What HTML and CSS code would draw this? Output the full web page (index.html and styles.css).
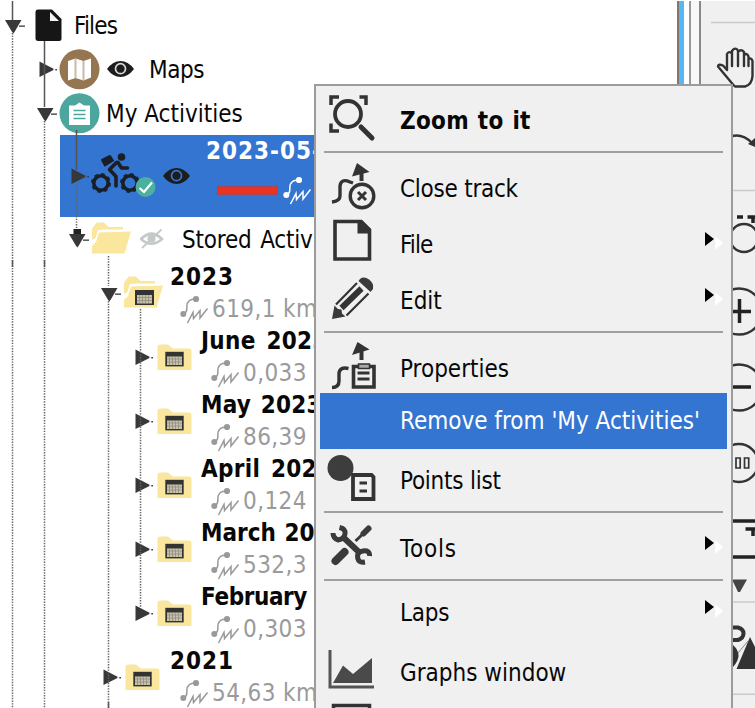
FILE: index.html
```html
<!DOCTYPE html>
<html lang="en">
<head>
<meta charset="utf-8">
<title>My Activities</title>
<link rel="stylesheet" href="styles.css">
</head>
<body>
<svg class="defs" aria-hidden="true">
  <symbol id="down" viewBox="0 0 24 24"><path d="M1 7H17.500L10.800 18.500 9.300 20.500 7.800 18.500Z"/><path d="M15 12.500h6v1.300h-6z"/></symbol>
  <symbol id="right" viewBox="0 0 24 24"><path d="M3.500 4.500 17.500 11.800V13L3.500 20Z"/><path d="M19.300 12h1.600v1.600h-1.600z"/></symbol>
  <symbol id="eye" viewBox="0 0 27 18"><path d="M0 9Q6 1 13.500 1T27 9Q21 17 13.500 17T0 9Z"/><circle class="ring" cx="13.500" cy="8.700" r="5"/><circle cx="13.500" cy="8.700" r="2"/></symbol>
  <symbol id="track" viewBox="179 291 29 30"><circle cx="195" cy="296" r="3.100"/><circle cx="182.300" cy="311" r="3"/><path class="line" d="M183 311C189 307 183 302 188 298Q190 296 195 296M186.500 320 192 309.500 192.500 315.500 199 307.500 199 315 206.500 305.500"/></symbol>
  <symbol id="folder" viewBox="157 343 35 27"><path class="paper" d="M157.500 346Q157.500 343.500 160 343.500H168L173 347.500H189Q191.500 347.500 191.500 350V369H157.500Z"/><path class="dark" d="M165.300 350.800h18.400v14.600h-18.400z"/><path class="cells" d="M167 355.500h15v8.500h-15z"/><path class="grid" d="M169.500 355.500v8.500M172.500 355.500v8.500M175.500 355.500v8.500M178.500 355.500v8.500M167 358h15M167 361h15"/></symbol>
  <symbol id="open" viewBox="91 223 40 34"><path class="paper" d="M92 241V230Q94 226 97 223.500H104L108.500 228H123V230.500H106L98 231 95.500 239Z"/><path class="paper" d="M99 233.500 131 232.500 124.500 254.500H92V247L96 243Z"/></symbol>
  <symbol id="cal" viewBox="0 0 19 15"><path class="dark" d="M0 0h19v15h-19z"/><path class="cells" d="M2 5h15v8.500h-15z"/><path class="grid" d="M4.500 5v8.500M7.500 5v8.500M10.500 5v8.500M13.500 5v8.500M2 7.500h15M2 10.500h15"/></symbol>
</svg>

<div class="app">
  <main class="tree">
    <div class="row d0"><svg class="tw"><use href="#down"/></svg>
      <svg class="ic-file" viewBox="35 9 27 33"><path fill="#161616" d="M38 9.500H52L61.500 19V38.500Q61.500 41 59 41H38.500Q35.500 41 35.500 38.500V12Q35.500 9.500 38 9.500Z"/><path fill="#f4f4f4" d="M50 12 59 21H50Z"/></svg>
      <span class="label files">Files</span></div>
    <div class="row d1"><svg class="tw"><use href="#right"/></svg>
      <svg class="ic-round" viewBox="59 49 41 41"><circle cx="79.500" cy="69.300" r="20" fill="#967650"/><path fill="#fff" d="M68 61 75.500 58.500 83.500 61 91 58.500V77.500L83.500 80.500 75.500 78 68 80.500Z"/><path fill="none" stroke="#c9bba7" stroke-width="2" d="M75.500 59V78M83.500 61V80"/></svg>
      <svg class="ic-eye"><use href="#eye"/></svg>
      <span class="label maps">Maps</span></div>
    <div class="row d1"><svg class="tw"><use href="#down"/></svg>
      <svg class="ic-round" viewBox="59 93 41 41"><circle cx="79.500" cy="113.300" r="20" fill="#4da69e"/><path fill="#fff" d="M69 105.500H75L79.500 102.500 84 105.500H90V125H69Z"/><path stroke="#4da69e" stroke-width="1.700" d="M73.500 110.500h12M73.500 114.500h12M73.500 118.500h12"/></svg>
      <span class="label acts">My Activities</span></div>
    <div class="row d2 selected"><svg class="tw"><use href="#right"/></svg>
      <svg class="ic-bike" viewBox="91 154 66 48"><g fill="none" stroke="#191f25" stroke-width="3.600"><circle cx="101" cy="185" r="7.200"/><circle cx="130" cy="185" r="7.200"/><g stroke-width="1.500" stroke-dasharray="3.600 3.620"><circle cx="101" cy="185" r="9.200"/><circle cx="130" cy="185" r="9.200"/></g><path stroke-linejoin="round" stroke-linecap="round" d="M116.500 164.500 109.500 171.500 116 178.500V188M118 164.500 121.500 170H127.500"/></g><path fill="#191f25" stroke="#191f25" stroke-width="2" stroke-linejoin="round" d="M102 162 110 158 113 162.500 105 167.500Z"/><circle cx="121.500" cy="159" r="3.800" fill="#191f25"/><circle cx="145.500" cy="189" r="10" fill="#4cb09f"/><path fill="none" stroke="#fff" stroke-width="2.200" d="M139.500 190 144 194 152 184.500"/></svg>
      <svg class="ic-eye"><use href="#eye"/></svg>
      <div class="info"><b class="digits">2023-05-</b><div class="meta"><i class="swatch"></i><svg class="ic-track"><use href="#track"/></svg></div></div></div>
    <div class="row d2"><svg class="tw"><use href="#down"/></svg>
      <svg class="ic-open stored"><use href="#open"/></svg>
      <svg class="ic-hidden" viewBox="140 230 24 22"><path fill="none" stroke="#c2cbca" stroke-width="2.600" d="M141 241Q151.500 230.500 162 241 151.500 250.500 141 241Z"/><circle cx="151.500" cy="240.500" r="4" fill="#c2cbca"/><path stroke="#c2cbca" stroke-width="1.800" d="M142 250 161.500 231.500"/></svg>
      <span class="label storedl">Stored Activities</span></div>

    <div class="row tall d3"><svg class="tw"><use href="#down"/></svg>
      <span class="folderbox"><svg class="ic-open"><use href="#open"/></svg><svg class="ic-cal"><use href="#cal"/></svg></span>
      <div class="info year open"><b class="digits">2023</b><div class="meta"><svg class="ic-track"><use href="#track"/></svg><span>619,1 km</span></div></div></div>
    <div class="row tall d4"><svg class="tw"><use href="#right"/></svg><svg class="ic-folder"><use href="#folder"/></svg>
      <div class="info"><b>June 2023</b><div class="meta"><svg class="ic-track"><use href="#track"/></svg><span>0,033</span></div></div></div>
    <div class="row tall d4"><svg class="tw"><use href="#right"/></svg><svg class="ic-folder"><use href="#folder"/></svg>
      <div class="info"><b class="may">May 2023</b><div class="meta"><svg class="ic-track"><use href="#track"/></svg><span>86,39</span></div></div></div>
    <div class="row tall d4"><svg class="tw"><use href="#right"/></svg><svg class="ic-folder"><use href="#folder"/></svg>
      <div class="info"><b>April 2023</b><div class="meta"><svg class="ic-track"><use href="#track"/></svg><span>0,124</span></div></div></div>
    <div class="row tall d4"><svg class="tw"><use href="#right"/></svg><svg class="ic-folder"><use href="#folder"/></svg>
      <div class="info"><b class="march">March 2023</b><div class="meta"><svg class="ic-track"><use href="#track"/></svg><span>532,3</span></div></div></div>
    <div class="row tall d4"><svg class="tw"><use href="#right"/></svg><svg class="ic-folder"><use href="#folder"/></svg>
      <div class="info"><b class="february">February</b><div class="meta"><svg class="ic-track"><use href="#track"/></svg><span>0,303</span></div></div></div>
    <div class="row tall d3"><svg class="tw"><use href="#right"/></svg><svg class="ic-folder"><use href="#folder"/></svg>
      <div class="info year"><b class="digits">2021</b><div class="meta"><svg class="ic-track"><use href="#track"/></svg><span>54,63 km</span></div></div></div>

    <svg class="guides" viewBox="0 0 160 708"><g fill="none" stroke="#555" stroke-width="1.500"><path d="M12.500 1V20M44.500 41V107M76.500 130V170"/><g stroke="#666" stroke-dasharray="1.400 1.270"><path d="M12.500 33V708M44.500 121V708M76.500 184V228M108.500 256V286M108.500 301V708M140.500 309V608"/></g><path d="M12.500 260v7M44.500 260v7M108.500 702v6"/></g><path fill="#222" d="M73.500 229h7.500v5h-7.500z"/></svg>
  </main>
  <div class="splitter"></div>
  <aside class="toolbar">
    <svg viewBox="702 1 53 707"><g fill="none" stroke="#cacaca" stroke-width="1.500"><path d="M711 22.500H755M733 190.500H755M733 602H755M733 694.300H755"/></g>
      <g fill="none" stroke="#333" stroke-width="2.400" stroke-linejoin="round" stroke-linecap="round"><path d="M733 84.500 728 78.500 718 66.500Q718 63.500 723 65.500L727 70V54Q729 50.500 732 53.500V66M732 54V51Q735 46.500 738 50.500V66M738 52Q741 48.500 744 52V66M744 55Q747 52.500 748.500 56.500V66M748.500 59Q751.500 57.500 752.500 61V76Q752 84.500 745 86.500H735L733 84.500"/>
      <path d="M732 136Q743 133.500 752 143"/></g>
      <path fill="#333" d="M748 144 755 138V147Z"/>
      <g fill="none" stroke="#333" stroke-width="2.400"><circle cx="744" cy="238" r="14"/><circle cx="739" cy="311.500" r="23"/><circle cx="739" cy="387.500" r="23"/><circle cx="739" cy="463" r="19"/><path d="M736 458h4.200v10h-4.200zM744.500 458h4.200v10h-4.200z" stroke-width="1.700"/></g>
      <g stroke="#222" stroke-width="3.500" fill="none"><path d="M729 311.500H751M739.500 299V323M729 387H751"/><path d="M737 217h6M747.500 217h8M753 217v6"/><path d="M733 521H755M733 557H755M745.500 529H755M753 529v7"/></g>
      <path fill="#444" d="M732 579.500H747L740 592H738Z"/>
      <path fill="none" stroke="#333" stroke-width="4" d="M733 627.500H738Q743.500 629 743.500 633.500T738 640H733"/>
      <path fill="#333" d="M733 645Q744 655 733 667ZM736.500 669 750 637 755 647V669Z"/><path stroke="#888" d="M738 653 748 641"/></svg>
  </aside>

  <nav class="menu">
    <div class="item strong"><svg viewBox="324 92 56 56"><g fill="none" stroke="#333"><path stroke-width="3.500" d="M331 105V97H339M359.500 97H366V105M331 123.500V131H339"/><circle cx="348" cy="114" r="13" stroke-width="3.800"/><path stroke-width="5" stroke-linecap="round" d="M361 127 372 138"/></g></svg><span>Zoom to it</span></div>
    <hr>
    <div class="item"><svg viewBox="324 160 56 56"><g fill="none" stroke="#333" stroke-width="3.400"><path d="M332 202Q340 201 340 196V186Q341 178 350 182L353 183"/><circle cx="362" cy="196" r="11.800"/><path stroke-width="3" d="M358 192 366 200M366 192 358 200"/><path stroke-width="4" d="M361.500 173V181"/></g><path fill="#333" d="M357 163 369.500 172 352 176.500Z"/></svg><span class="tight">Close track</span></div>
    <div class="item"><svg viewBox="324 216 56 56"><path fill="none" stroke="#333" stroke-width="3.600" d="M335 221.500H361L369.500 230V259H335Z"/><path fill="#333" d="M357.500 220H362L371 229V233.500H357.500Z"/></svg><span class="tightest">File</span><i class="sub"></i></div>
    <div class="item"><svg viewBox="324 272 56 56"><g fill="#3a3a3a"><path d="M360 279Q364 276 369 279.500T373 289L370.500 292 358.500 281Z"/><path d="M332 319 334.500 305.500 338 309 341.500 309.500 342 313.500 345.500 316.500Z"/></g><path fill="none" stroke="#333" stroke-width="2.200" d="M336 304.500 357 283M346.500 315.500 368.500 293.500"/><path stroke="#333" stroke-width="6" d="M341.500 308 361.500 288.500"/></svg><span>Edit</span><i class="sub"></i></div>
    <hr>
    <div class="item props"><svg viewBox="324 340 56 56"><path fill="none" stroke="#333" stroke-width="3.400" d="M332 387.500Q339 387.500 339 381V373Q340 366.500 348.500 368.500"/><path stroke="#333" stroke-width="4" d="M361.500 350V360"/><path fill="#333" d="M357.500 342 369.500 349.500 352 355Z"/><path fill="none" stroke="#333" stroke-width="3.600" d="M353.500 366.500H374V387H353.500Z"/><path fill="#aaa" stroke="#333" stroke-width="1.500" d="M358.500 364h11v4.500h-11z"/><path stroke="#333" stroke-width="2.900" d="M357.500 373h12M357.500 379h12"/></svg><span>Properties</span></div>
    <div class="item active"><svg></svg><span>Remove from 'My Activities'</span></div>
    <div class="item points"><svg viewBox="324 452 56 56"><circle cx="340.500" cy="468" r="13" fill="#3d3d3d"/><path fill="none" stroke="#333" stroke-width="3.800" d="M353 475H371.500L373.500 477V499H353Z"/><path stroke="#333" stroke-width="3" d="M359.500 483h7.500M359.500 491h7.500"/></svg><span class="tight">Points list</span></div>
    <hr>
    <div class="item"><svg viewBox="324 520 56 56"><g fill="none" stroke="#3a3a3a"><path stroke-width="6" d="M343 537 361 554"/><path stroke-width="5" d="M339.500 527.500Q346 529 345 534T338 540Q333 538 333 533M369.500 556Q370 550 363 551T358 559Q359 563 365 562"/><path stroke-width="8" stroke-linecap="round" d="M335.500 561 344.500 552"/><path stroke-width="3" d="M355.500 541 366 531"/><path stroke-width="6" stroke-linecap="round" d="M363.500 533.500 368.500 528.500"/></g></svg><span class="wide">Tools</span><i class="sub"></i></div>
    <hr>
    <div class="item laps"><svg></svg><span class="tight">Laps</span><i class="sub"></i></div>
    <div class="item"><svg viewBox="324 644 56 56"><path fill="none" stroke="#555" stroke-width="3" d="M330 650V687H374"/><path fill="#4a4a4a" d="M333 683 343 665.500 353 674 372 658V683Z"/></svg><span>Graphs window</span></div>
    <div class="item"><svg viewBox="324 700 56 56"><path fill="none" stroke="#333" stroke-width="3.500" d="M333.500 740V705.500H369.500V740"/></svg></div>
  </nav>
</div>
</body>
</html>
```

FILE: styles.css
```css
* { box-sizing: border-box; }
body { margin: 0; background: #fff; overflow: hidden; font: 24px/32px "DejaVu Sans Condensed", "DejaVu Sans", sans-serif; font-stretch: condensed; color: #080808; }
svg { display: block; flex: none; }
.defs { position: absolute; width: 0; height: 0; }
.app { position: relative; display: grid; grid-template-columns: 677px 25px 53px; width: 755px; height: 708px; overflow: hidden; }
.tree { position: relative; padding-top: 3px; overflow: hidden; }
.guides { position: absolute; left: 0; top: 0; width: 160px; height: 708px; }

.row { display: flex; align-items: center; height: 44px; white-space: nowrap; }
.row.tall { height: 64px; }
.d0 { padding-left: 4px; }
.d1 { padding-left: 36px; }
.d2 { padding-left: 68px; }
.d3 { padding-left: 100px; }
.d4 { padding-left: 132px; }
.tw { width: 24px; height: 24px; fill: #383838; }
.row.selected { height: 82px; margin-left: 60px; padding-left: 8px; background: #3375d1; }

.ic-file { width: 27px; height: 33px; margin-left: 7px; }
.ic-round { width: 41px; height: 41px; margin-left: -1px; }
.ic-eye { width: 27px; height: 18px; margin-left: 7px; fill: #1d1d1d; stroke: #d8d8d8; stroke-width: 0; }
.ring { fill: none; stroke: inherit; stroke-width: 1.7px; }
.ic-bike { width: 66px; height: 48px; margin-left: -1px; }
.selected .ic-eye { margin-left: 6px; stroke: #3375d1; }
.ic-open { width: 40px; height: 34px; }
.ic-open.stored { margin-left: -1px; }
.ic-hidden { width: 24px; height: 22px; margin-left: 9px; }
.folderbox { position: relative; margin-left: -1px; }
.ic-cal { position: absolute; left: 12px; top: 14px; width: 19px; height: 15px; }
.ic-folder { width: 35px; height: 27px; margin-left: 1px; }
.paper { fill: #fae69c; }
.dark { fill: #333; }
.cells { fill: #c5c1ac; }
.grid { fill: none; stroke: #8d8a7c; stroke-width: 0.7px; }

.label { padding-top: 1px; }
.files { margin-left: 12px; letter-spacing: -0.8px; }
.maps { margin-left: 15px; letter-spacing: -0.4px; }
.acts { margin-left: 6px; }
.storedl { margin-left: 18px; letter-spacing: -0.2px; word-spacing: 2px; }

.info { margin-left: 9px; }
.info b { display: block; height: 32px; letter-spacing: 0.3px; word-spacing: 3px; }
.info b.digits { letter-spacing: 1px; }
.info b.may { letter-spacing: 0.2px; word-spacing: 2px; }
.info b.march { letter-spacing: 0; word-spacing: 1px; }
.info b.february { letter-spacing: -0.4px; }
.meta { display: flex; align-items: center; height: 32px; padding-left: 10px; color: #9a9a9c; letter-spacing: 0.4px; }
.ic-track { width: 29px; height: 30px; color: #999; fill: currentColor; }
.ic-track + span { margin-left: 3px; }
.line { fill: none; stroke: currentColor; stroke-width: 1.5px; }
.year { margin-left: 10px; }
.year.open { margin-left: 7px; }
.selected .info { margin-left: 16px; height: 82px; color: #fff; }
.selected .meta { height: 46px; padding-left: 11px; }
.selected .ic-track { color: #fff; margin-left: 5px; }
.swatch { width: 61px; height: 9px; background: #ea3323; border: 1px solid #a94550; }

.splitter { margin-top: 1px; background: linear-gradient(to right, #8a7468 0 2px, #55b8f5 2px 7px, #fff 7px 12px, #999 12px 14px, #f8f8f8 14px 22px, #888 22px 24px, #f0f0f0 24px); }
.toolbar { margin-top: 1px; background: #f0f0f0; }
.toolbar svg { width: 53px; height: 707px; }

.menu { position: absolute; left: 314px; top: 84px; width: 419px; height: 640px; padding: 6px 4px 0; border: 2px solid #9c9c9c; background: #f0f0f0; }
.menu hr { height: 12px; margin: 0 4px; border: 0; background: linear-gradient(#f0f0f0 3px, #a0a0a0 3px 5px, #f0f0f0 5px); }
.item { display: flex; align-items: center; height: 56px; padding-left: 4px; white-space: nowrap; }
.item > svg { width: 56px; height: 56px; margin-right: 20px; }
.item span { padding-top: 2px; }
.strong { font-weight: bold; letter-spacing: 0.3px; word-spacing: 1px; }
.tight { letter-spacing: -0.25px; }
.tightest { letter-spacing: -0.9px; }
.wide { letter-spacing: 0.8px; }
.props { height: 53px; align-items: flex-start; }
.props span { padding-top: 13px; }
.item.active { background: #3375d1; color: #fff; }
.item.active span { padding-top: 0; }
.points { height: 59px; align-items: flex-start; padding-top: 3px; }
.points span { padding-top: 13px; }
.laps { padding-bottom: 8px; }
.sub { position: relative; margin: -10px 13px 0 auto; border: solid transparent; border-width: 7px 0 7px 9px; border-left-color: #000; }
.sub::after { content: ""; position: absolute; left: 1px; top: -3px; border: solid transparent; border-width: 7px 0 7px 8px; border-left-color: #fff; }
```
